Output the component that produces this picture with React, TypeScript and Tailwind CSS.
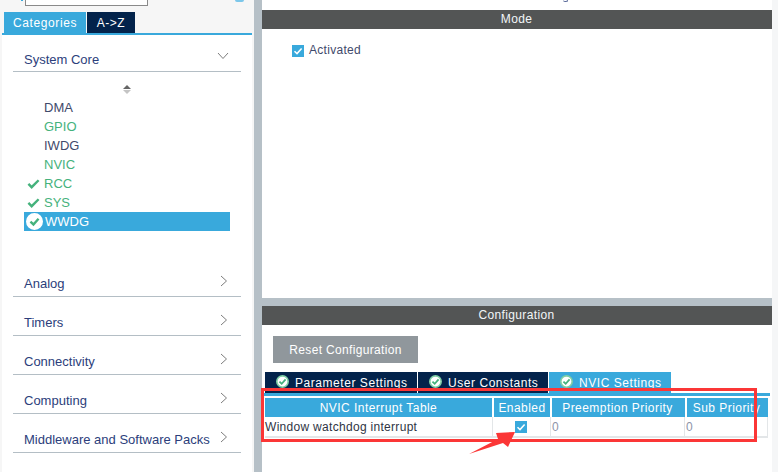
const font = { fontFamily: '"Liberation Sans", Arial, sans-serif' };

function Check({ className }: { className: string }) {
  return (
    <svg viewBox="0 0 14 14" className={className}>
      <path d="M1.5 7.5 L5 11 L12.5 3.5" fill="none" stroke="#45b27c" strokeWidth="2.6" />
    </svg>
  );
}

function CircleCheck({ size = 13, ring = 'white' }: { size?: number; ring?: string }) {
  return (
    <svg viewBox="0 0 16 16" width={size} height={size} className="shrink-0">
      <circle cx="8" cy="8" r="7" fill="white" stroke={ring} strokeWidth="2" />
      <path d="M4.2 8.2 L7 10.8 L11.8 5.4" fill="none" stroke="#45b27c" strokeWidth="2.2" />
    </svg>
  );
}

function CheckBox() {
  return (
    <svg viewBox="0 0 12 12" width="12" height="12" className="shrink-0">
      <rect width="12" height="12" fill="#39a9dc" />
      <path d="M2.5 6.2 L5 8.6 L9.6 3.4" fill="none" stroke="white" strokeWidth="1.5" />
    </svg>
  );
}

function Chevron({ down }: { down?: boolean }) {
  return down ? (
    <svg viewBox="0 0 12 8" width="12" height="8">
      <path d="M1 1 L6 6.5 L11 1" fill="none" stroke="#7d7d7d" strokeWidth="1" />
    </svg>
  ) : (
    <svg viewBox="0 0 8 12" width="8" height="12">
      <path d="M1 1 L6.5 6 L1 11" fill="none" stroke="#7d7d7d" strokeWidth="1" />
    </svg>
  );
}

const ipList = [
  { name: 'DMA', green: false, check: false },
  { name: 'GPIO', green: true, check: false },
  { name: 'IWDG', green: false, check: false },
  { name: 'NVIC', green: true, check: false },
  { name: 'RCC', green: true, check: true },
  { name: 'SYS', green: true, check: true },
];

const categories = ['Analog', 'Timers', 'Connectivity', 'Computing', 'Middleware and Software Packs'];

function Category({ label }: { label: string }) {
  return (
    <div className="h-[39px] flex items-end">
      <div className="w-full h-[29px] border-b border-[#b4bec5] flex justify-between pl-[11px] pr-[13px] text-[13px] text-[#2c3e7b]">
        <span className="whitespace-nowrap pt-[6px]">{label}</span>
        <span className="pt-[7px]">
          <Chevron />
        </span>
      </div>
    </div>
  );
}

function Sidebar() {
  return (
    <aside className="w-[250px] ml-[2px] h-full bg-white flex flex-col overflow-hidden">
      <div className="h-[12px] bg-[#f6f6f6] relative shrink-0">
        <div className="absolute left-[19px] top-0 w-[2px] h-[1px] bg-[#39a9dc]" />
        <div className="absolute left-[23px] top-[-8px] w-[123px] h-[14px] border border-[#8a8a8a] bg-white" />
        <div className="absolute left-[233px] top-0 w-[9px] h-[2px] rounded-b bg-[#7cc7ea]" />
      </div>
      <div className="h-[21px] bg-[#f6f6f6] flex pl-[2px] shrink-0">
        <div className="w-[82px] bg-[#39a9dc] text-white text-[12px] tracking-[0.6px] flex items-center justify-center">Categories</div>
        <div className="w-[48px] ml-[1px] bg-[#03234b] text-white text-[12px] tracking-[0.5px] flex items-center justify-center">A-&gt;Z</div>
      </div>
      <div className="h-[2px] bg-[#39a9dc] shrink-0" />
      <div className="px-[11px] flex-1">
        <div className="h-[37px] border-b border-[#b4bec5] flex justify-between pl-[11px] pr-[12px] text-[13px] text-[#2c3e7b]">
          <span className="pt-[15px]">System Core</span>
          <span className="pt-[17px]">
            <Chevron down />
          </span>
        </div>
        <div className="h-[26px] flex justify-center pt-[13px] pr-[1px]">
          <div className="flex flex-col gap-[1px] items-center">
            <div className="w-0 h-0 border-x-[4px] border-x-transparent border-b-[4px] border-b-[#666]" />
            <div className="w-0 h-0 border-x-[4px] border-x-transparent border-t-[4px] border-t-[#c4c4c4]" />
          </div>
        </div>
        <div className="ml-[11px] w-[206px] text-[13px]">
          {ipList.map((ip) => (
            <div key={ip.name} className="h-[19px] flex items-center">
              <div className="w-[20px] shrink-0 flex justify-center pr-[2px]">
                {ip.check && <Check className="w-[13px] h-[13px]" />}
              </div>
              <span className={ip.green ? 'text-[#45b27c]' : 'text-[#3f4a6b]'}>{ip.name}</span>
            </div>
          ))}
          <div className="h-[19px] bg-[#39a9dc] flex items-center text-white">
            <div className="w-[21px] shrink-0 flex justify-center">
              <CircleCheck size={17} />
            </div>
            <span>WWDG</span>
          </div>
        </div>
        <div className="h-[27px]" />
        {categories.map((c) => (
          <Category key={c} label={c} />
        ))}
      </div>
    </aside>
  );
}

function PanelTitle({ title }: { title: string }) {
  return (
    <div className="h-[19px] bg-[#535555] text-[#f2f6f8] text-[12px] tracking-[0.35px] flex items-center justify-center shrink-0 pb-[1px] pr-[1px]">
      {title}
    </div>
  );
}

function Tab({ label, width, active }: { label: string; width: string; active?: boolean }) {
  return (
    <div
      className={`h-[21px] flex pt-[2px] pl-[11px] text-[12px] tracking-[0.55px] text-white whitespace-nowrap ${width} ${
        active ? 'bg-[#39a9dc]' : 'bg-[#03234b]'
      }`}
    >
      <span className="mt-[1px] mr-[6px]">
        <CircleCheck size={13} ring="#7fcfa5" />
      </span>
      {label}
    </div>
  );
}

function HeaderCell({ label, className }: { label: string; className: string }) {
  return (
    <div className={`h-[19px] bg-[#39a9dc] text-white text-[12px] tracking-[0.45px] flex items-center justify-center whitespace-nowrap overflow-hidden ${className}`}>
      {label}
    </div>
  );
}

function Config() {
  return (
    <section className="mt-[8px] flex-1 bg-white flex flex-col overflow-hidden">
      <PanelTitle title="Configuration" />
      <div className="pl-[11px] pt-[11px] shrink-0">
        <div className="w-[145px] h-[27px] bg-[#90979c] text-white text-[12px] tracking-[0.33px] flex items-center justify-center">
          Reset Configuration
        </div>
      </div>
      <div className="flex pl-[3px] pt-[9px] gap-[1px] shrink-0">
        <Tab label="Parameter Settings" width="w-[152px]" />
        <Tab label="User Constants" width="w-[130px]" />
        <Tab label="NVIC Settings" width="w-[122px]" active />
      </div>
      <div className="h-[3px] ml-[1px] bg-[#39a9dc] w-[507px] shrink-0" />
      <div className="ml-[3px] w-[503px] mt-[2px]">
        <div className="flex gap-[2px]">
          <HeaderCell label="NVIC Interrupt Table" className="w-[227px]" />
          <HeaderCell label="Enabled" className="w-[56px]" />
          <HeaderCell label="Preemption Priority" className="w-[133px] pr-[2px]" />
          <HeaderCell label="Sub Priority" className="w-[81px] pr-[2px]" />
        </div>
        <div className="flex h-[21px] border-b-2 border-[#e3e6e8] text-[12px]">
          <div className="w-[228px] h-full flex items-center tracking-[0.3px] text-[#2f3444] border-r border-[#e3e6e8] whitespace-nowrap">
            Window watchdog interrupt
          </div>
          <div className="w-[58px] h-full flex items-center justify-center pr-[2px] border-r border-[#e3e6e8]">
            <CheckBox />
          </div>
          <div className="w-[134px] h-full pl-[1px] flex items-center text-[#8d94a8] border-r border-[#e3e6e8]">0</div>
          <div className="w-[83px] h-full pl-[1px] flex items-center text-[#8d94a8] border-r border-[#e3e6e8]">0</div>
        </div>
      </div>
    </section>
  );
}

export default function App() {
  return (
    <div className="relative w-[778px] h-[472px] overflow-hidden bg-[#b6c0c7] flex" style={font}>
      <div className="w-[254px] h-full bg-[#f6f6f6] shrink-0">
        <Sidebar />
      </div>
      <div className="w-[8px] shrink-0" />
      <main className="w-[510px] h-full flex flex-col shrink-0">
        <section className="h-[298px] bg-white shrink-0 pt-[10px] relative">
          <div className="absolute left-[301px] top-0 w-[5px] h-[2px] rounded-b border-b border-r border-[#5a6a9a]" />
          <PanelTitle title="Mode" />
          <div className="flex items-center gap-[5px] pl-[30px] pt-[13px] text-[12px] tracking-[0.3px] text-[#3f4a6b]">
            <CheckBox />
            <span className="-mt-[1px]">Activated</span>
          </div>
        </section>
        <Config />
      </main>
      <div className="flex-1 bg-[#f5f6f7]" />

      {/* annotation */}
      <div className="absolute left-[261px] top-[388px] w-[496px] h-[54px] border-[3px] border-[#fb3636]" />
      <svg className="absolute left-[465px] top-[425px]" width="60" height="32" viewBox="0 0 60 32">
        <path d="M4 29 L33 14 L31 8 L50 7 L43 22 L38 18 Z" fill="#fb3636" />
      </svg>
    </div>
  );
}
